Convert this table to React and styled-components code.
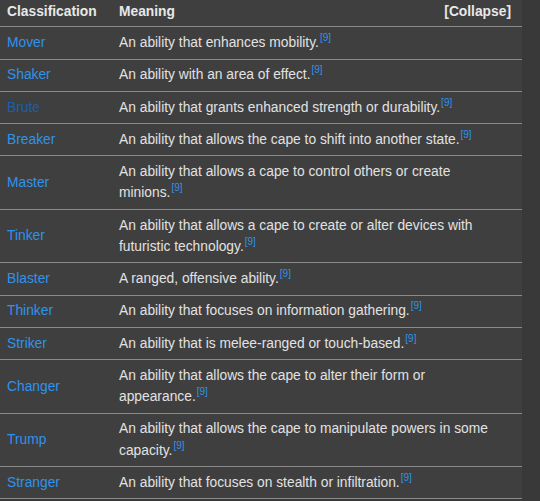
import React from "react";
import styled, { createGlobalStyle } from "styled-components";

const Global = createGlobalStyle`
  html, body { margin: 0; padding: 0; background: #393939; }
  body { font-family: "Liberation Sans", Arial, sans-serif; }
`;

const Table = styled.table`
  width: 522px;
  border-collapse: collapse;
  background: #3f3f3f;
  color: #e2e2e2;
  font-size: 13.8px;
  line-height: 21.4px;
`;

const HeadCell = styled.th`
  text-align: left;
  font-weight: bold;
  color: #e8e8e8;
  padding: 1px 7px 4px;
  height: 21px;
  width: ${(p) => p.$w || "auto"};
  border-bottom: 1px solid #8a8a8a;
`;

const Collapse = styled.span`
  float: right;
  margin-right: 4px;
`;

const Row = styled.tr`
  border-bottom: 1px solid #8a8a8a;
`;

const Cell = styled.td`
  padding: 4.9px 7px;
  vertical-align: middle;
  &:first-child { width: 98px; }
  &:last-child { padding-right: 18px; }
`;

const Link = styled.span`
  color: ${(p) => (p.$visited ? "#1b5ea8" : "#2f93ea")};
`;

const Ref = styled.sup`
  color: #2f93ea;
  font-size: 10px;
  line-height: 1;
  vertical-align: 6px;
  margin-left: 1px;
`;

const rows = [
  ["Mover", "An ability that enhances mobility."],
  ["Shaker", "An ability with an area of effect."],
  ["Brute", "An ability that grants enhanced strength or durability.", true],
  ["Breaker", "An ability that allows the cape to shift into another state."],
  ["Master", "An ability that allows a cape to control others or create minions."],
  ["Tinker", "An ability that allows a cape to create or alter devices with futuristic technology."],
  ["Blaster", "A ranged, offensive ability."],
  ["Thinker", "An ability that focuses on information gathering."],
  ["Striker", "An ability that is melee-ranged or touch-based."],
  ["Changer", "An ability that allows the cape to alter their form or appearance."],
  ["Trump", "An ability that allows the cape to manipulate powers in some capacity."],
  ["Stranger", "An ability that focuses on stealth or infiltration."],
];

export default function App() {
  return (
    <>
      <Global />
      <Table>
        <thead>
          <tr>
            <HeadCell $w="98px">Classification</HeadCell>
            <HeadCell>
              Meaning<Collapse>[Collapse]</Collapse>
            </HeadCell>
          </tr>
        </thead>
        <tbody>
          {rows.map(([name, text, visited]) => (
            <Row key={name}>
              <Cell>
                <Link $visited={visited}>{name}</Link>
              </Cell>
              <Cell>
                {text}
                <Ref>[9]</Ref>
              </Cell>
            </Row>
          ))}
        </tbody>
      </Table>
    </>
  );
}
